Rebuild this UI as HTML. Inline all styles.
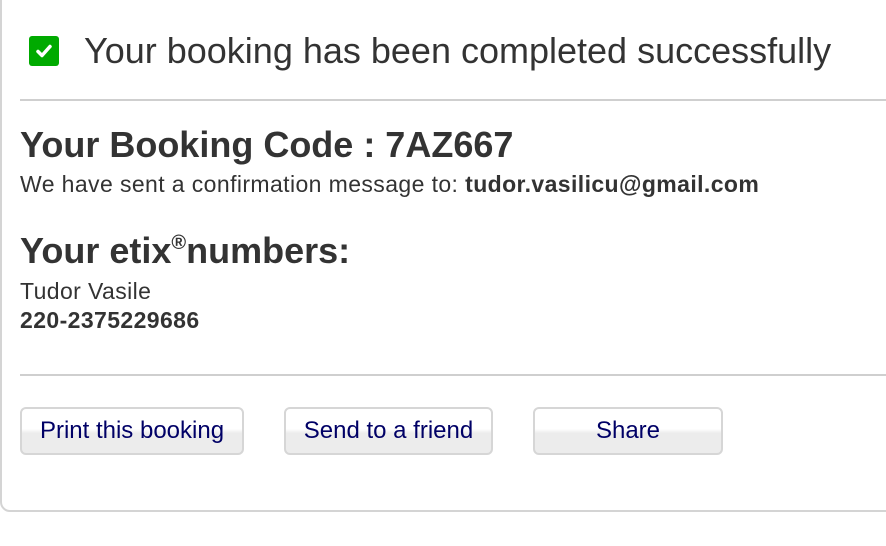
<!DOCTYPE html>
<html><head><style>
body{margin:0;width:886px;height:546px;background:#fff;font-family:"Liberation Sans",Arial,sans-serif;color:#333;position:relative;overflow:hidden}
.box{position:absolute;left:0;top:-10px;width:900px;height:522px;border:2px solid #d4d4d4;border-radius:10px;box-sizing:border-box}
.abs{position:absolute;white-space:nowrap}
.chk{position:absolute;left:29px;top:36px;width:30px;height:30px;background:#00aa00;border-radius:3px}
.hr{position:absolute;left:20px;right:0;height:2px;background:#cfcfcf}
.btn{position:absolute;top:407px;height:48px;box-sizing:border-box;border:2px solid #d6d6d6;border-radius:6px;background:linear-gradient(#fff 0,#fff 45%,#ececec 55%,#ececec 100%);color:#000066;font-size:24px;text-align:center;line-height:44px}
</style></head><body>
<div class="box"></div>
<div class="chk"><svg width="30" height="30" viewBox="0 0 30 30"><path d="M9 15.5l4 4 8-9" stroke="#fff" stroke-width="3.5" fill="none" stroke-linecap="round" stroke-linejoin="round"/></svg></div>
<div class="abs" style="left:84px;top:30px;font-size:36px;color:#333">Your booking has been completed successfully</div>
<div class="hr" style="top:99px"></div>
<div class="abs" style="left:20px;top:124px;font-size:36px;font-weight:bold">Your Booking Code : 7AZ667</div>
<div class="abs" style="left:20px;top:171px;font-size:23px;letter-spacing:0.4px">We have sent a confirmation message to: <b>tudor.vasilicu@gmail.com</b></div>
<div class="abs" style="left:20px;top:230px;font-size:36px;font-weight:bold">Your etix<sup style="font-size:20px;vertical-align:14px">®</sup>numbers:</div>
<div class="abs" style="left:20px;top:278px;font-size:23px;letter-spacing:0.4px">Tudor Vasile</div>
<div class="abs" style="left:20px;top:307px;font-size:23px;font-weight:bold;letter-spacing:0.4px">220-2375229686</div>
<div class="hr" style="top:374px"></div>
<div class="btn" style="left:20px;width:224px">Print this booking</div>
<div class="btn" style="left:284px;width:209px">Send to a friend</div>
<div class="btn" style="left:533px;width:190px">Share</div>
</body></html>
